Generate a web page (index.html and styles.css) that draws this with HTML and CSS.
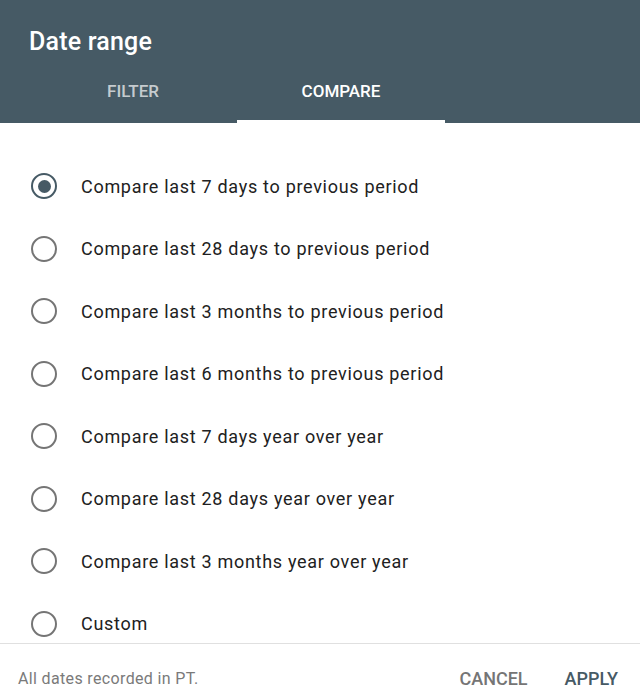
FILE: index.html
```html
<!DOCTYPE html>
<html lang="en">
<head>
<meta charset="utf-8">
<title>Date range</title>
<link rel="stylesheet" href="styles.css">
</head>
<body>
<div class="dialog">
  <header class="head">
    <h1 class="title">Date range</h1>
    <nav class="tabs">
      <div class="tab">FILTER</div>
      <div class="tab active">COMPARE</div>
    </nav>
  </header>
  <main class="content">
    <ul class="options">
      <li class="option"><span class="radio checked"></span><span class="label">Compare last 7 days to previous period</span></li>
      <li class="option"><span class="radio"></span><span class="label">Compare last 28 days to previous period</span></li>
      <li class="option"><span class="radio"></span><span class="label">Compare last 3 months to previous period</span></li>
      <li class="option"><span class="radio"></span><span class="label">Compare last 6 months to previous period</span></li>
      <li class="option"><span class="radio"></span><span class="label">Compare last 7 days year over year</span></li>
      <li class="option"><span class="radio"></span><span class="label">Compare last 28 days year over year</span></li>
      <li class="option"><span class="radio"></span><span class="label">Compare last 3 months year over year</span></li>
      <li class="option"><span class="radio"></span><span class="label">Custom</span></li>
    </ul>
  </main>
  <footer class="foot">
    <span class="note">All dates recorded in PT.</span>
    <div class="actions">
      <button class="btn">CANCEL</button>
      <button class="btn primary">APPLY</button>
    </div>
  </footer>
</div>
</body>
</html>
```
FILE: styles.css
```css
html, body {
  margin: 0;
  padding: 0;
  height: 100%;
  overflow: hidden;
  background: #ffffff;
}
body {
  font-family: Roboto, "Liberation Sans", Arial, sans-serif;
}
.dialog {
  display: grid;
  grid-template-rows: 123px 521px 68px;
  height: 712px;
  width: 640px;
}
.head {
  background: #465a65;
  display: flex;
  flex-direction: column;
  padding-left: 29px;
}
.title {
  margin: 0;
  height: 61px;
  display: flex;
  align-items: center;
  padding-top: 22px;
  box-sizing: border-box;
  font-size: 25px;
  font-weight: 500;
  color: #ffffff;
  letter-spacing: 0.2px;
}
.tabs {
  display: flex;
  height: 62px;
}
.tab {
  width: 208px;
  display: flex;
  align-items: center;
  justify-content: center;
  font-size: 17px;
  font-weight: 500;
  color: rgba(255, 255, 255, 0.7);
  padding-bottom: 2px;
  box-sizing: border-box;
  position: relative;
}
.tab.active {
  color: #ffffff;
}
.tab.active::after {
  content: "";
  position: absolute;
  left: 0;
  right: 0;
  bottom: 0;
  height: 3px;
  background: #ffffff;
}
.content {
  overflow: hidden;
  border-bottom: 1px solid #e0e0e0;
}
.options {
  list-style: none;
  margin: 0;
  padding: 32px 0 0 31px;
}
.option {
  height: 62.5px;
  display: flex;
  align-items: center;
  gap: 24px;
}
.radio {
  width: 26px;
  height: 26px;
  box-sizing: border-box;
  border: 2.6px solid #757575;
  border-radius: 50%;
  flex: none;
  display: flex;
  align-items: center;
  justify-content: center;
}
.radio.checked {
  border-color: #465a65;
}
.radio.checked::before {
  content: "";
  width: 13px;
  height: 13px;
  border-radius: 50%;
  background: #465a65;
}
.label {
  font-size: 18px;
  color: #212121;
  letter-spacing: 0.7px;
}
.foot {
  display: flex;
  align-items: center;
  justify-content: space-between;
  padding: 0 22px 0 18px;
}
.note {
  font-size: 16px;
  color: #7a7a7a;
  letter-spacing: 0.35px;
}
.actions {
  display: flex;
  gap: 37px;
}
.btn {
  border: none;
  background: none;
  padding: 0;
  font-family: inherit;
  font-size: 18px;
  font-weight: 500;
  color: #757575;
}
.btn.primary {
  color: #465a65;
}
```
